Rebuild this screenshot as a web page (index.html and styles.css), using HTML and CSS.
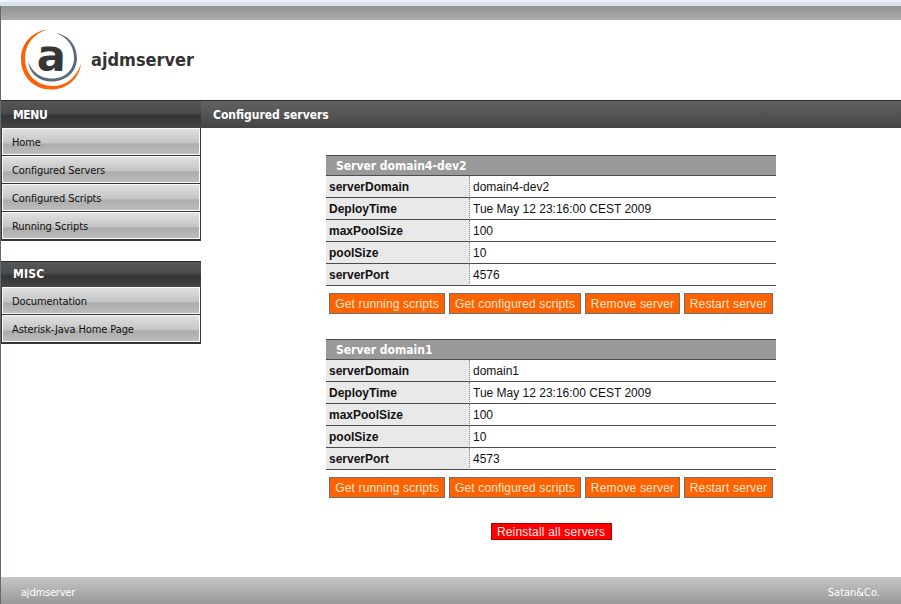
FILE: index.html
```html
<!DOCTYPE html>
<html lang="en">
<head>
<meta charset="utf-8">
<title>ajdmserver</title>
<link rel="stylesheet" href="styles.css">
</head>
<body>
<div class="chrome"></div>
<div class="page">
  <div class="topbar"></div>
  <header class="header">
    <svg class="logo" viewBox="0 0 64 64" width="64" height="64" aria-hidden="true">
      <path fill="#fb6208" d="M29 2C13 5 2 16 2 32C2 50 15 62.500 32 62.500C48 62.500 60 52 62 37C57 51 47 59 34 59C18 59 6 48 6 31C6 18 14 7 29 2Z"/>
      <path fill="#5a6a7a" d="M37 6C49 8 58 18 58 31C58 45 47 54.500 33 54.500C20 54.500 11 47 9 35C14 46 22 51.500 33 51.500C46 51.500 55 43 55 31C55 19 48 10 37 6Z"/>
      <text class="logo-letter" x="32.5" y="43.500" text-anchor="middle" transform="rotate(2 32 32)">a</text>
    </svg>
    <h1 class="brand"><span>ajdmserver</span></h1>
  </header>
  <div class="body">
    <nav class="sidebar">
      <h2 class="bar bar-menu">MENU</h2>
      <ul class="menu">
        <li><a>Home</a></li>
        <li><a>Configured Servers</a></li>
        <li><a>Configured Scripts</a></li>
        <li><a>Running Scripts</a></li>
      </ul>
      <h2 class="bar bar-misc">MISC</h2>
      <ul class="menu">
        <li><a>Documentation</a></li>
        <li><a>Asterisk-Java Home Page</a></li>
      </ul>
    </nav>
    <main class="main">
      <h2 class="bar bar-title">Configured servers</h2>
      <section class="server">
        <h3>Server domain4-dev2</h3>
        <dl>
          <dt>serverDomain</dt><dd>domain4-dev2</dd>
          <dt>DeployTime</dt><dd>Tue May 12 23:16:00 CEST 2009</dd>
          <dt>maxPoolSize</dt><dd>100</dd>
          <dt>poolSize</dt><dd>10</dd>
          <dt>serverPort</dt><dd>4576</dd>
        </dl>
        <div class="actions">
          <button class="w1">Get running scripts</button>
          <button class="w2">Get configured scripts</button>
          <button class="w3">Remove server</button>
          <button class="w4">Restart server</button>
        </div>
      </section>
      <section class="server">
        <h3>Server domain1</h3>
        <dl>
          <dt>serverDomain</dt><dd>domain1</dd>
          <dt>DeployTime</dt><dd>Tue May 12 23:16:00 CEST 2009</dd>
          <dt>maxPoolSize</dt><dd>100</dd>
          <dt>poolSize</dt><dd>10</dd>
          <dt>serverPort</dt><dd>4573</dd>
        </dl>
        <div class="actions">
          <button class="w1">Get running scripts</button>
          <button class="w2">Get configured scripts</button>
          <button class="w3">Remove server</button>
          <button class="w4">Restart server</button>
        </div>
      </section>
      <button class="reinstall">Reinstall all servers</button>
    </main>
  </div>
  <footer class="footer"><span class="product">ajdmserver</span><span>Satan&amp;Co.</span></footer>
</div>
</body>
</html>
```

FILE: styles.css
```css
* { box-sizing: border-box; }
html, body { margin: 0; height: 604px; overflow: hidden; }
body {
  background: #fff;
  font-family: "DejaVu Sans Condensed", "DejaVu Sans", sans-serif;
  font-stretch: condensed;
  display: flex;
  flex-direction: column;
}
h1, h2, h3, ul, dl, dd { margin: 0; padding: 0; }
.chrome { height: 6px; background: linear-gradient(#eef2f9 0 2px, #d9e0ee 2px 6px); }
.page {
  flex: 1;
  display: flex;
  flex-direction: column;
  border-left: 1px solid #5c6b74;
}
.topbar { height: 14px; background: linear-gradient(#939393, #acacac); }
.header { height: 80px; display: flex; align-items: center; padding: 0 0 2px 18px; }
.logo { display: block; flex: none; }
.logo-letter { font: bold 43px "DejaVu Sans", sans-serif; fill: #363636; }
.brand { margin-left: 8px; padding-top: 1px; font-size: 18px; line-height: 24px; color: #333; }
.body { flex: 1; display: flex; }
.sidebar { width: 200px; }
.bar {
  height: 28px;
  padding-left: 12px;
  border-top: 1px solid #2b2b2b;
  background: linear-gradient(#555 0, #4b4b4b 45%, #343434 55%, #464646 100%);
  color: #fff;
  font-size: 12px;
  line-height: 28px;
}
.bar-menu { letter-spacing: -.4px; }
.bar-misc { height: 26px; line-height: 24px; margin-top: 20px; letter-spacing: .2px; }
.bar-title { align-self: stretch; background: linear-gradient(#626262, #454545); }
.menu { list-style: none; border: solid #363636; border-width: 0 1px 1px; }
.menu li {
  height: 28px;
  border-bottom: 1px solid #363636;
}
.menu a {
  display: block;
  height: 27px;
  padding-left: 9px;
  border: 1px solid #fafafa;
  background: linear-gradient(#e0e0e0 0, #c5c5c5 55%, #acacac 60%, #bdbdbd 100%);
  color: #111;
  font-size: 11px;
  line-height: 28px;
  letter-spacing: -.1px;
}
.main { flex: 1; display: flex; flex-direction: column; align-items: center; }
.server { width: 450px; margin-top: 27px; height: 157px; }
.server h3 {
  height: 21px;
  padding-left: 10px;
  border: solid #4c4c4c;
  border-width: 1px 0;
  background: #999;
  color: #fff;
  font-size: 12px;
  line-height: 20px;
}
.server dl {
  display: grid;
  grid-template-columns: 144px 1fr;
  grid-auto-rows: 22px;
  font: 12px/23px "Liberation Sans", Arial, sans-serif;
  color: #111;
}
.server dt {
  padding-left: 3px;
  background: #e9e9e9;
  border-right: 1px dotted #8c8c8c;
  border-bottom: 1px solid #4c4c4c;
  font-weight: bold;
}
.server dd { padding-left: 3px; border-bottom: 1px solid #4c4c4c; }
.actions { display: flex; gap: 4px; padding: 7px 3px 0; }
button {
  height: 21px;
  padding: 1px 0 0;
  border: 1px solid #71706a;
  border-radius: 0;
  background: #ff6200;
  color: #ffe9cf;
  font: 12px/19px "Liberation Sans", Arial, sans-serif;
  letter-spacing: .15px;
  white-space: nowrap;
}
.w1 { width: 116px; }
.w2 { width: 132px; }
.w3 { width: 95px; }
.w4 { width: 89px; }
.reinstall {
  width: 121px;
  height: 17px;
  margin-top: 27px;
  border-color: #b50000;
  background: #fe0000;
  color: #ffeaea;
  line-height: 15px;
  letter-spacing: .2px;
}
.footer {
  height: 27px;
  display: flex;
  justify-content: space-between;
  padding: 0 21px 0 20px;
  background: linear-gradient(#c6c6c6, #999);
  color: #fff;
  font-size: 11px;
  line-height: 32px;
}
.product { letter-spacing: -.2px; }
```
